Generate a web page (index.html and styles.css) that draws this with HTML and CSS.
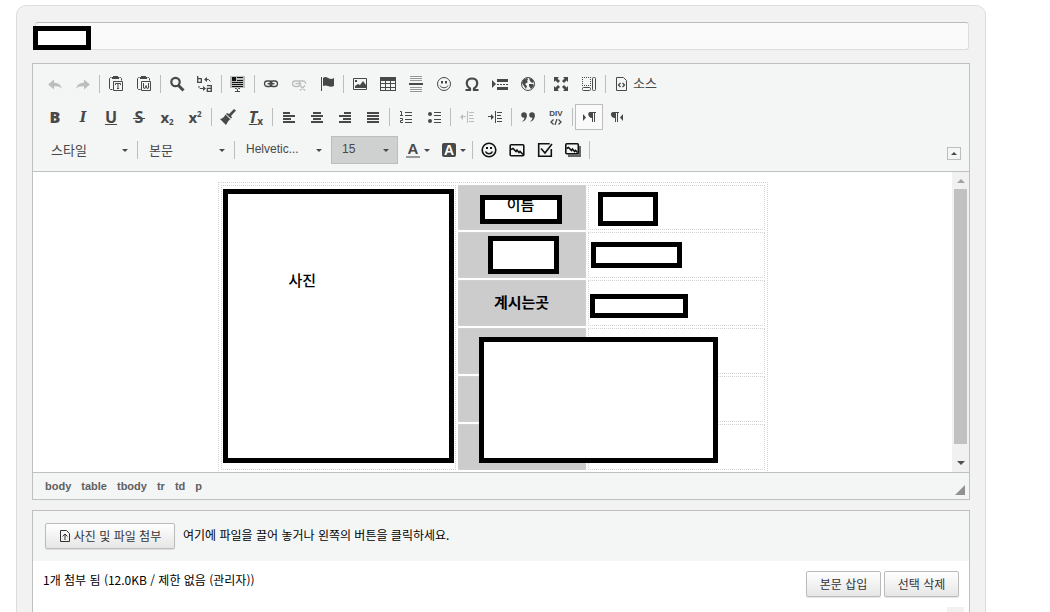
FILE: index.html
```html
<!DOCTYPE html>
<html lang="ko">
<head>
<meta charset="utf-8">
<title>글쓰기</title>
<link rel="stylesheet" href="styles.css">
</head>
<body>
<main class="panel">
  <div class="title-row">
    <input class="title-input" type="text" aria-label="제목">
    <span class="mask mask-title"></span>
  </div>

  <section class="editor">
    <div class="toolbar">
      <div class="tool-row">
        <button class="tool off" aria-label="실행 취소"><svg viewBox="0 0 16 16"><path d="M1 8.500l6-5v3.200c4 0 7 2 8 6-2-2.200-4.500-2.700-8-2.500v3.300z"/></svg></button>
        <button class="tool off" aria-label="다시 실행"><svg viewBox="0 0 16 16"><path d="M15 8.500l-6-5v3.200c-4 0-7 2-8 6 2-2.200 4.500-2.700 8-2.500v3.300z"/></svg></button>
        <span class="sep"></span>
        <button class="tool" aria-label="텍스트로 붙여넣기"><svg viewBox="0 0 16 16"><path class="l" d="M3.500 1.500h-1l-1 1v10l1 1h2M11.500 1.500h1l1 1v2"/><path d="M5 0h5v1h1v2H4V1h1z"/><path class="l" d="M5.500 5.500h9v9h-9z"/><path class="l" d="M7.500 9V7.500h5V9M10 7.500v5M9 12.500h2"/></svg></button>
        <button class="tool" aria-label="Word 에서 붙여넣기"><svg viewBox="0 0 16 16"><path class="l" d="M3.500 1.500h-1l-1 1v10l1 1h2M11.500 1.500h1l1 1v2"/><path d="M5 0h5v1h1v2H4V1h1z"/><path class="l" d="M5.500 5.500h9v9h-9z"/><path class="l" d="M7.500 7v5l1.500 .5 1-3 1 3 1.500-.5V7"/></svg></button>
        <span class="sep"></span>
        <button class="tool" aria-label="찾기"><svg viewBox="0 0 16 16"><circle class="w2" cx="6.500" cy="6" r="4.200"/><path class="w3" d="M9.500 9.500l5 5"/></svg></button>
        <button class="tool" aria-label="바꾸기"><svg viewBox="0 0 16 16"><path class="l2" d="M.7 0v6.400h3.600v-3.700H.7M10 9.600h4.300v5.700h-4v-3h4"/><path class="l" d="M9 3.500h2.500l2 2M2 10v1.500l1 1h3"/><path d="M7 3.500L10 1v5zM9 12.500L6 10v5z"/></svg></button>
        <span class="sep"></span>
        <button class="tool" aria-label="모두 선택"><svg viewBox="0 0 16 16"><path class="tint" d="M0 0h15v12H0z"/><path class="black" d="M2 1h4v4H2zM7 1h6v1H7zM7 4h6v1H7zM2 6h11v1H2zM2 8h11v1H2zM2 10h11v1H2z"/><path class="l" d="M5 12.500h1.500l1 1 1-1H10M7.500 13v3M5 15.500h5"/></svg></button>
        <span class="sep"></span>
        <button class="tool" aria-label="링크 삽입"><svg viewBox="0 0 16 16"><rect class="l2" x="1.500" y="5" width="7.500" height="5.500" rx="2.700"/><rect class="l2" x="7" y="5" width="7.500" height="5.500" rx="2.700"/><path class="l2" d="M4.500 7.700h7"/></svg></button>
        <button class="tool off" aria-label="링크 지우기"><svg viewBox="0 0 16 16"><rect class="l2" x="1.500" y="5" width="7.500" height="5.500" rx="2.700"/><path class="l2" d="M8 5h4a2.500 2.500 0 0 1 2.500 3M4.500 7.700h6M9 9.500l5 5M14 9.500l-5 5"/></svg></button>
        <button class="tool" aria-label="책갈피"><svg viewBox="0 0 16 16"><path d="M2 1h1v14H2zM4 2c2-1.500 4-1 6 .5 2 .7 3 .5 5-.5v8c-2 1-4 1-6 0-2-.8-3-.8-5 0z"/></svg></button>
        <span class="sep"></span>
        <button class="tool" aria-label="이미지"><svg viewBox="0 0 16 16"><path class="l" d="M1.500 2.500h13v11h-13z"/><path d="M3 12V10l3-2 2 1 3-4 3 4v3zM3 4h2v2H3z"/></svg></button>
        <button class="tool" aria-label="표"><svg viewBox="0 0 16 16"><path d="M0 1h16v14H0zM1 5v2h4V5zM6 5v2h4V5zM11 5v2h4V5zM1 8v3h4V8zM6 8v3h4V8zM11 8v3h4V8zM1 12v2h4v-2zM6 12v2h4v-2zM11 12v2h4v-2z" fill-rule="evenodd"/></svg></button>
        <button class="tool" aria-label="가로 줄 삽입"><svg viewBox="0 0 16 16"><path class="mid" d="M2 0h12v1H2zM2 2h12v1H2zM2 4h12v1H2zM2 11h12v1H2zM2 13h12v1H2zM2 15h12v1H2z"/><path d="M1 7h14v2H1z"/></svg></button>
        <button class="tool" aria-label="이모티콘"><svg viewBox="0 0 16 16"><circle class="l" cx="8" cy="8" r="6.500"/><path d="M5 5h2v2.500H5zM9 5h2v2.500H9z"/><path class="l" d="M4 9.500c1.500 3 6.500 3 8 0"/></svg></button>
        <button class="tool" aria-label="특수문자 삽입"><svg viewBox="0 0 16 16"><path class="w2" d="M1.500 14H6V12.500C1 9 2 2.500 8 2.500S15 9 10 12.500V14h4.500"/></svg></button>
        <button class="tool" aria-label="페이지 나누기"><svg viewBox="0 0 16 16"><path d="M0 4l4 4-4 4zM5 3h11v3H5zM5 8h2v1H5zM8 8h2v1H8zM11 8h2v1h-2zM14 8h2v1h-2zM5 11h11v3H5z"/></svg></button>
        <button class="tool" aria-label="아이프레임"><svg viewBox="0 0 16 16"><circle class="l" cx="8" cy="8" r="6.500"/><path d="M3 4l4-2 1 1-1 2 1 1-3 2 2 2-1 3-2-3-2-3zM9 2l3 1 2 3-2 1-2-2zM9 8l4 0 1 2-3 3-2-3z"/></svg></button>
        <span class="sep"></span>
        <button class="tool" aria-label="최대화"><svg viewBox="0 0 16 16"><path d="M1 1h5L4.500 2.500 7 5 5 7 2.500 4.500 1 6zM15 1v5l-1.500-1.500L11 7 9 5l2.500-2.500L10 1zM1 15v-5l1.500 1.500L5 9l2 2-2.500 2.500L6 15zM15 15h-5l1.500-1.500L9 11l2-2 2.500 2.500L15 10z"/></svg></button>
        <button class="tool" aria-label="블록 보기"><svg viewBox="0 0 16 16"><path class="dots" d="M1 1.500h9M1 9.500h9M1.500 1v9M9.500 1v9"/><rect class="l" x="1.500" y="11.500" width="8" height="3" rx="1"/><rect class="l" x="11.500" y="1.500" width="3" height="13" rx="1"/></svg></button>
        <span class="sep"></span>
        <button class="tool tool-wide"><svg viewBox="0 0 16 16"><path class="l" d="M2.500 1.500h7l3 3v10h-10z"/><path class="l2" d="M6.500 7L4.500 9l2 2M8.500 7l2 2-2 2"/></svg><span>소스</span></button>
      </div>

      <div class="tool-row">
        <button class="tool glyph" aria-label="굵게"><b>B</b></button>
        <button class="tool glyph" aria-label="기울임꼴"><i class="serif">I</i></button>
        <button class="tool glyph" aria-label="밑줄"><u>U</u></button>
        <button class="tool glyph" aria-label="취소선"><span class="strike">S</span></button>
        <button class="tool glyph small" aria-label="아래 첨자"><span>x<sub>2</sub></span></button>
        <button class="tool glyph small" aria-label="위 첨자"><span>x<sup>2</sup></span></button>
        <span class="sep"></span>
        <button class="tool" aria-label="스타일 복사"><svg viewBox="0 0 16 16"><path d="M14 0l2 1.500L11 7l1 1.500-1 1L6 5l1-1 2 1zM5.500 5.500l5 5C8 11 7 15 6 16L0 10c3-.5 4-2 5.500-4.500z"/></svg></button>
        <button class="tool glyph" aria-label="형식 지우기"><span class="clear"><i>T</i><small>x</small></span></button>
        <span class="sep"></span>
        <button class="tool" aria-label="왼쪽 정렬"><svg viewBox="0 0 16 16"><path d="M2 3h7v2H2zM2 6h12v2H2zM2 9h8v2H2zM2 12h12v2H2z"/></svg></button>
        <button class="tool" aria-label="가운데 정렬"><svg viewBox="0 0 16 16"><path d="M4 3h8v2H4zM2 6h12v2H2zM4 9h8v2H4zM2 12h12v2H2z"/></svg></button>
        <button class="tool" aria-label="오른쪽 정렬"><svg viewBox="0 0 16 16"><path d="M7 3h7v2H7zM2 6h12v2H2zM6 9h8v2H6zM2 12h12v2H2z"/></svg></button>
        <button class="tool" aria-label="양쪽 맞춤"><svg viewBox="0 0 16 16"><path d="M2 3h12v2H2zM2 6h12v2H2zM2 9h12v2H2zM2 12h12v2H2z"/></svg></button>
        <span class="sep"></span>
        <button class="tool" aria-label="순번 목록"><svg viewBox="0 0 16 16"><path class="l" d="M2 2.500h1.500v4M2 6.500h3M2 9.500h2.500v2h-2v2H5"/><path d="M7 3h7v1H7zM7 6h7v1H7zM7 10h7v1H7zM7 13h7v1H7z"/></svg></button>
        <button class="tool" aria-label="순번 없는 목록"><svg viewBox="0 0 16 16"><circle cx="4" cy="5" r="2"/><circle cx="4" cy="12" r="2"/><path d="M8 3h7v1H8zM8 6h7v1H8zM8 10h7v1H8zM8 13h7v1H8z"/></svg></button>
        <span class="sep"></span>
        <button class="tool off" aria-label="내어쓰기"><svg viewBox="0 0 16 16"><path d="M1 8l3-3v2h3v1H4v3zM8 2h1v12H8zM10 3h5v1h-5zM10 6h4v1h-4zM10 9h5v1h-5zM10 12h5v1h-5z"/></svg></button>
        <button class="tool" aria-label="들여쓰기"><svg viewBox="0 0 16 16"><path d="M7 8L4 5v2H1v1h3v3zM8 2h1v12H8zM10 3h5v1h-5zM10 6h4v1h-4zM10 9h5v1h-5zM10 12h5v1h-5z"/></svg></button>
        <span class="sep"></span>
        <button class="tool" aria-label="인용 단락"><svg viewBox="0 0 16 16"><circle cx="4" cy="6" r="2.800"/><circle cx="12" cy="6" r="2.800"/><path d="M6.800 6c0 4-2 6-4.800 7 1.500-1.500 2.500-3 2.500-5zM14.800 6c0 4-2 6-4.800 7 1.500-1.500 2.500-3 2.500-5z"/></svg></button>
        <button class="tool div-tool" aria-label="DIV 컨테이너 만들기"><span>DIV</span><svg viewBox="0 0 12 6"><path class="l2" d="M3.500 .5L1 3l2.500 2.500M8.500 .5L11 3 8.500 5.500M7 0L5 6"/></svg></button>
        <span class="sep"></span>
        <button class="tool pressed" aria-label="왼쪽에서 오른쪽"><svg viewBox="0 0 16 16"><path d="M2 5l3 3.500L2 12zM9 3h6v1h-1v9h-1V4h-1v9h-1V9C7 9 6 3 9 3z"/></svg></button>
        <button class="tool" aria-label="오른쪽에서 왼쪽"><svg viewBox="0 0 16 16"><path d="M14 5l-3 3.500 3 3.500zM4 3h6v1H9v9H8V4H7v9H6V9C1 9 1 3 4 3z"/></svg></button>
      </div>

      <div class="tool-row">
        <label class="combo combo-style"><select aria-label="스타일"><option>스타일</option></select><i class="caret"></i></label>
        <span class="sep"></span>
        <label class="combo combo-format"><select aria-label="문단 형식"><option>본문</option></select><i class="caret"></i></label>
        <span class="sep"></span>
        <label class="combo combo-font"><select aria-label="글꼴"><option>Helvetic...</option></select><i class="caret"></i></label>
        <label class="combo combo-size"><select aria-label="글자 크기"><option>15</option></select><i class="caret"></i></label>
        <button class="tool tool-color" aria-label="글자 색상"><b class="ink">A</b><i class="caret"></i></button>
        <button class="tool tool-color" aria-label="배경 색상"><b class="fill">A</b><i class="caret"></i></button>
        <span class="sep"></span>
        <button class="tool dark" aria-label="스티커"><svg viewBox="0 0 16 16"><circle class="w15" cx="8" cy="8" r="6.800"/><path d="M5 5h2v2H5zM9 5h2v2H9z"/><path class="w15" d="M4.500 9.500c1.500 3 5.500 3 7 0"/></svg></button>
        <button class="tool dark" aria-label="이미지 갤러리"><svg viewBox="0 0 16 16"><rect class="w15" x="1.200" y="2.700" width="13.600" height="11" rx="1"/><path class="w15" d="M2 7.500l2-1 3 3 1-1.500 2 2.500 1-1 3 3"/></svg></button>
        <button class="tool dark" aria-label="설문"><svg viewBox="0 0 16 16"><path class="w15" d="M14.300 7v7.300H1.700V1.700h11M4 6.500l4 4.500 7-9"/></svg></button>
        <button class="tool dark" aria-label="슬라이드"><svg viewBox="0 0 16 16"><path class="tail" d="M13.500 4H16v11H3v-2.500h10.500z"/><rect class="w15" x=".8" y="1.800" width="12.500" height="10" rx="1"/><path class="w15" d="M1.500 6.500l2-1 3 3 1-1.500 2 2.500 1-1 2 2"/></svg></button>
        <span class="sep"></span>
        <button class="collapse" aria-label="툴바 줄이기"><i class="caret up"></i></button>
      </div>
    </div>

    <div class="content">
      <div class="page">
        <div class="sheet">
          <table class="profile">
            <colgroup><col class="c-photo"><col class="c-name"><col class="c-value"></colgroup>
            <tbody>
              <tr class="first"><td class="photo" rowspan="6"><p>사진</p></td><th></th><td></td></tr>
              <tr><th></th><td></td></tr>
              <tr><th>계시는곳</th><td></td></tr>
              <tr><th></th><td></td></tr>
              <tr><th></th><td></td></tr>
              <tr><th></th><td></td></tr>
            </tbody>
          </table>
          <span class="mask mask-photo"></span>
          <span class="mask mask-name">이름</span>
          <span class="mask mask-name-value"></span>
          <span class="mask mask-label"></span>
          <span class="mask mask-label-value"></span>
          <span class="mask mask-place"></span>
          <span class="mask mask-rest"></span>
        </div>
      </div>
      <div class="scrollbar"><i class="arrow arrow-up"></i><span class="thumb"></span><i class="arrow arrow-down"></i></div>
    </div>

    <nav class="path">
      <a href="#">body</a><a href="#">table</a><a href="#">tbody</a><a href="#">tr</a><a href="#">td</a><a href="#">p</a>
      <span class="resizer"></span>
    </nav>
  </section>

  <section class="upload">
    <div class="upload-head">
      <button class="btn btn-attach"><svg viewBox="0 0 12 14"><path d="M1.500 1.500h6l3 3v8h-9zM6 11V5M3.500 7.500L6 5l2.500 2.500"/></svg>사진 및 파일 첨부</button>
      <span>여기에 파일을 끌어 놓거나 왼쪽의 버튼을 클릭하세요.</span>
    </div>
    <div class="upload-status">
      <span class="status-text">1개 첨부 됨 (12.0KB / 제한 없음 (관리자))</span>
      <button class="btn">본문 삽입</button>
      <button class="btn">선택 삭제</button>
    </div>
    <div class="file-list"><span class="list-scroll"></span></div>
  </section>
</main>
</body>
</html>
```
FILE: styles.css
```css
* { box-sizing: border-box; }
html { overflow-y: auto; scrollbar-width: none; }
body {
  margin: 0;
  padding: 5px 64px 0 16px;
  background: #fff;
  color: #000;
  font: 12px/18px "Noto Sans CJK KR", sans-serif;
}
button, input, select { font: inherit; color: inherit; margin: 0; }
button { padding: 0; border: 0; background: none; }

.panel {
  padding: 16px 15px;
  border: 1px solid #ddd;
  border-radius: 10px;
  background: #f2f2f2;
}

.title-row { position: relative; padding: 0 1px 0 3px; margin-bottom: 13px; }
.title-input {
  display: block;
  width: 100%;
  height: 28px;
  padding: 4px 8px;
  border: 1px solid #ddd;
  border-top-color: #bbb;
  border-radius: 3px;
  background: #fafafa;
}

.mask {
  position: absolute;
  border: 5px solid #000;
  background: #fff;
}
.mask-title { left: 1px; top: 4px; width: 58px; height: 24px; }

.editor { border: 1px solid #bfc1c1; background: #fff; margin-bottom: 10px; }
.toolbar {
  display: flex;
  flex-direction: column;
  gap: 5px;
  padding: 6px 8px 7px;
  border-bottom: 1px solid #bfc1c1;
  background: #f4f6f6;
  color: #484848;
}
.tool-row { display: flex; align-items: center; height: 28px; }
.tool {
  display: flex;
  flex: none;
  align-items: center;
  justify-content: center;
  width: 28px;
  height: 26px;
  color: #484848;
}
.tool svg { width: 16px; height: 16px; fill: currentColor; }
.tool.off { color: #bcbebe; }
.tool.dark { color: #111; }
.tool.pressed { border: 1px solid #bcbebe; background: #fafafa; }
.tool-wide { width: auto; padding: 0 6px; gap: 3px; font-size: 13px; line-height: 18px; }
.tool-wide span { padding-bottom: 2px; }
.l, .l2, .w15, .w2, .w3, .dots { fill: none; stroke: currentColor; stroke-width: 1; }
.l2 { stroke-width: 1.3; }
.w15 { stroke-width: 1.6; }
.w2 { stroke-width: 2.2; }
.w3 { stroke-width: 3; }
.dots { stroke-dasharray: 1 1; }
.tint { fill: #bdbdbd; }
.black { fill: #111; }
.mid { fill: #999; }
.tail { fill: #666; }
.sep { flex: none; width: 1px; height: 18px; margin: 0 2px; background: #bcbebe; }

.glyph { font: bold 16px/16px "Open Sans", sans-serif; }
.glyph .serif { font-family: "DejaVu Serif", serif; font-size: 14px; }
.glyph.small { font-size: 15px; }
.glyph sub, .glyph sup { font-size: 8px; line-height: 0; }
.glyph sub { vertical-align: -2px; }
.glyph sup { vertical-align: 6px; }
.strike {
  padding: 0 2px;
  background: linear-gradient(#484848, #484848) center 9px / 100% 1px no-repeat;
}
.clear { text-decoration: underline; }
.clear small { display: inline-block; font-size: 10px; line-height: 8px; vertical-align: bottom; }
.div-tool { flex-direction: column; gap: 1px; font: bold 8px/8px "Liberation Sans", sans-serif; }
.div-tool svg { width: 12px; height: 6px; }

.combo { position: relative; flex: none; height: 28px; }
.combo select {
  width: 100%;
  height: 100%;
  padding: 0 0 2px 10px;
  border: 0;
  background: none;
  appearance: none;
  font: 13px "Noto Sans CJK KR", sans-serif;
}
.combo .caret { position: absolute; right: 7px; top: 13px; }
.combo-style { width: 94px; }
.combo-format { width: 92px; }
.combo-format select { padding-left: 9px; }
.combo-font { width: 94px; }
.combo-font select, .combo-size select { font: 12px "Liberation Sans", sans-serif; }
.combo-font select { padding-left: 9px; }
.combo-font .caret { right: 9px; }
.combo-size { width: 67px; border: 1px solid #bcbebe; background: #cfd1d1; }
.combo-size .caret { top: 12px; right: 8px; }
.caret {
  flex: none;
  width: 0;
  height: 0;
  border: 3px solid transparent;
  border-top-color: #484848;
  border-bottom: 0;
}
.caret.up { border: 3px solid transparent; border-bottom-color: #484848; border-top: 0; }
.tool-color { width: 36px; padding-left: 4px; gap: 4px; font: bold 15px/14px "Liberation Sans", sans-serif; }
.ink { width: 14px; border-bottom: 2px solid #999; text-align: center; }
.fill { width: 14px; border-radius: 2px; background: #484848; color: #fff; font-size: 14px; }
.collapse {
  display: flex;
  align-items: center;
  justify-content: center;
  width: 14px;
  height: 13px;
  margin: 6px 0 0 auto;
  border: 1px solid #bcbebe;
}

.content { display: flex; height: 300px; }
.page { flex: 1; min-width: 0; overflow: hidden; padding-top: 10px; }
.sheet { position: relative; width: 550px; margin: 0 auto; font-size: 15px; line-height: 20px; font-weight: 500; }
.profile {
  width: 550px;
  table-layout: fixed;
  border: 1px dotted #d3d3d3;
  border-spacing: 2px;
}
.profile td, .profile th { height: 46px; padding: 0; border: 1px dotted #d3d3d3; }
.profile th { padding-bottom: 2px; background: #ccc; font-weight: bold; }
.profile .first td, .profile .first th { height: 45px; }
.c-photo { width: 235px; }
.c-name { width: 128px; }
.profile .photo { vertical-align: top; }
.photo p { position: relative; z-index: 1; margin: 84px 70px 0 67px; }
.mask-photo { left: 5px; top: 7px; width: 231px; height: 274px; }
.mask-name { left: 262px; top: 13px; width: 82px; height: 29px; overflow: hidden; line-height: 8px; text-align: center; }
.mask-name-value { left: 380px; top: 10px; width: 60px; height: 34px; }
.mask-label { left: 270px; top: 54px; width: 71px; height: 38px; }
.mask-label-value { left: 373px; top: 60px; width: 91px; height: 26px; }
.mask-place { left: 372px; top: 112px; width: 98px; height: 24px; }
.mask-rest { left: 261px; top: 155px; width: 239px; height: 126px; }

.scrollbar {
  display: flex;
  flex-direction: column;
  align-items: center;
  width: 17px;
  padding: 7px 0;
  background: #f1f1f1;
}
.thumb { width: 13px; height: 255px; margin: 6px 0 auto; background: #c1c1c1; }
.arrow { border: 4px solid transparent; }
.arrow-up { border-bottom-color: #a3a3a3; border-top: 0; }
.arrow-down { border-top-color: #505050; border-bottom: 0; }

.path {
  display: flex;
  align-items: center;
  gap: 10px;
  height: 27px;
  padding: 0 4px 0 12px;
  border-top: 1px solid #bfc1c1;
  background: #f4f6f6;
  font: bold 11px/14px "Liberation Sans", sans-serif;
}
.path a { color: #606060; text-decoration: none; }
.resizer {
  align-self: flex-end;
  margin: 0 0 4px auto;
  border: 5px solid #919191;
  border-top-color: transparent;
  border-left-color: transparent;
}

.upload { border: 1px solid #bfc1c1; background: #fff; }
.upload-head {
  display: flex;
  align-items: center;
  gap: 8px;
  height: 50px;
  padding: 0 12px;
  background: #f4f6f6;
}
.upload-head > span { padding-bottom: 2px; }
.upload-status { display: flex; align-items: center; gap: 3px; padding: 10px; }
.status-text { flex: 1; padding-bottom: 8px; }
.btn {
  display: flex;
  align-items: center;
  justify-content: center;
  gap: 3px;
  width: 75px;
  height: 26px;
  border: 1px solid #bbb;
  border-radius: 2px;
  background: linear-gradient(#fff, #e6e6e6);
  box-shadow: 0 1px 1px #0000001a;
  color: #333;
}
.btn-attach { width: 130px; }
.btn-attach svg { width: 12px; height: 14px; fill: none; stroke: #333; }
.file-list { display: flex; justify-content: flex-end; height: 40px; padding: 0 5px; }
.list-scroll { width: 17px; background: #f1f1f1; }
```
